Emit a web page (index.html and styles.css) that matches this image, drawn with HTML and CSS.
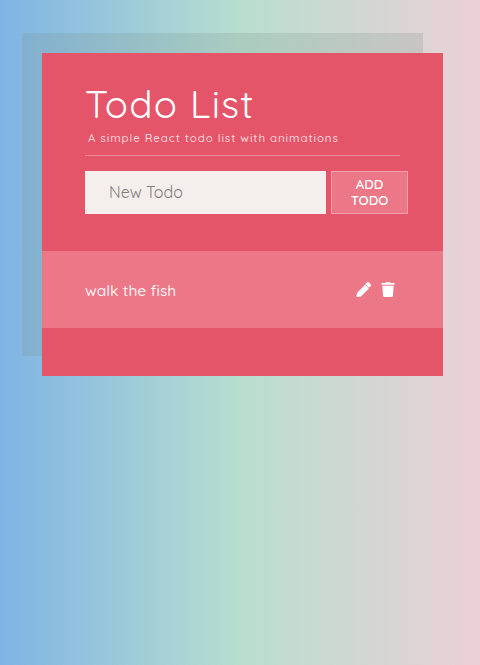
FILE: index.html
```html
<!DOCTYPE html>
<html lang="en">
<head>
<meta charset="utf-8">
<title>Todo List</title>
<link rel="stylesheet" href="styles.css">
</head>
<body>
<main class="todo-list">
  <header class="heading">
    <h1>Todo List</h1>
    <p>A simple React todo list with animations</p>
  </header>
  <form class="new-todo">
    <input type="text" placeholder="New Todo">
    <button type="button">ADD<br>TODO</button>
  </form>
  <ul class="todos">
    <li class="todo">
      <span class="task">walk the fish</span>
      <span class="actions">
        <svg class="icon" viewBox="0 0 512 512"><path d="M498 142l-46 46c-5 5-13 5-17 0L324 77c-5-5-5-12 0-17l46-46c19-19 49-19 68 0l60 60c19 19 19 49 0 68zM301 100L38 363 16 488c-3 17 12 32 29 29l124-22 263-263c5-5 5-12 0-17L318 100c-5-5-13-5-17 0z"/></svg>
        <svg class="icon trash" viewBox="0 0 448 512"><path d="M432 32H312l-9-19a24 24 0 0 0-22-13H167a24 24 0 0 0-22 13l-9 19H16A16 16 0 0 0 0 48v32a16 16 0 0 0 16 16h416a16 16 0 0 0 16-16V48a16 16 0 0 0-16-16zM32 128l21 339a48 48 0 0 0 48 45h246a48 48 0 0 0 48-45l21-339z"/></svg>
      </span>
    </li>
  </ul>
</main>
</body>
</html>
```
FILE: styles.css
```css
* {
  box-sizing: border-box;
}

body {
  margin: 0;
  min-height: 100vh;
  padding: 53px 37px 0 42px;
  background: linear-gradient(90deg, #7fb4e5 0%, #b8decf 50%, #ebd0d7 100%);
  font-family: Quicksand, Lato, sans-serif;
  color: #fff;
}

.todo-list {
  height: 323px;
  padding-top: 29px;
  background: #e5556a;
  box-shadow: -20px -20px 0 rgba(125, 145, 135, 0.22);
}

.heading {
  margin: 0 43px;
  height: 74px;
  border-bottom: 1px solid #f08b9a;
}

h1 {
  margin: 0;
  font-size: 38.4px;
  line-height: 44px;
  font-weight: 400;
  letter-spacing: 1.25px;
  white-space: nowrap;
}

.heading p {
  margin: 1px 0 0 3px;
  font-size: 11.5px;
  line-height: 22px;
  font-weight: 500;
  letter-spacing: 0.9px;
  white-space: nowrap;
  color: #fbd5da;
}

.new-todo {
  display: flex;
  gap: 5px;
  margin: 15px 35px 37px 43px;
  height: 43px;
}

input {
  width: 241px;
  padding: 0 24px 2px;
  border: 0;
  border-radius: 0;
  background: #f4efec;
  font: 400 16px Quicksand, Lato, sans-serif;
}

input::placeholder {
  color: #837c79;
}

button {
  width: 77px;
  padding: 0 0 2px;
  border: 1px solid #f4a0ac;
  background: #eb7787;
  color: #fff;
  font: 600 13.3px/16px Quicksand, Lato, sans-serif;
}

.todos {
  margin: 0;
  padding: 0;
  list-style: none;
}

.todo {
  display: flex;
  align-items: center;
  justify-content: space-between;
  height: 77px;
  padding: 0 48px 1px 43px;
  background: #eb7787;
  font-size: 15.5px;
  font-weight: 500;
}

.task {
  padding-top: 2px;
  color: #fff0f1;
}

.actions {
  display: flex;
  align-items: center;
  gap: 10px;
}

.icon {
  width: 15px;
  height: 15px;
  fill: #fff;
}

.trash {
  width: 14px;
}
```
